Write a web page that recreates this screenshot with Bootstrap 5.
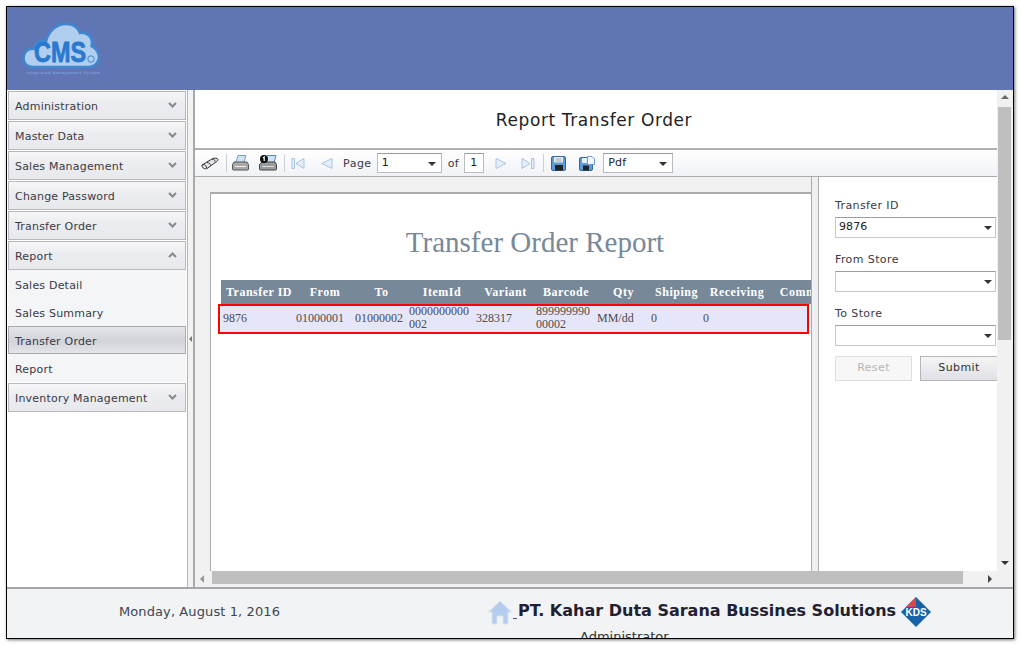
<!DOCTYPE html>
<html>
  <head>
    <title>Report Transfer Order</title>
    <meta charset="UTF-8" />
    <link href="https://cdn.jsdelivr.net/npm/bootstrap@5.3.3/dist/css/bootstrap.min.css" rel="stylesheet">
    <style>
      html, body { height: 100%; overflow: hidden; }
      body { background: #fff; font-family: "DejaVu Sans", Verdana, sans-serif; font-size: 11px; color: #3a3a44; }
      .app-frame { margin: 6px 0 0 6px; width: 1008px; height: 633px; border: 1px solid #000; box-shadow: 1px 1px 3px rgba(0,0,0,.55); background: #fff; overflow: hidden; }
      .app-head { height: 83px; background: #6076b4; padding: 15px 0 0 15px; }
      .app-mid { height: 497px; }

      /* left menu */
      .side-menu { width: 180px; padding: 1px 0 0 1px; }
      .menu-head { height: 29px; width: 178px; margin-bottom: 1px; padding: 4px 8px 0 6px; border: 1px solid #b6b8bb; background: linear-gradient(#f6f6f8, #ebecef 45%, #e8e9ed); letter-spacing: .2px; }
      .menu-head svg { margin-bottom: 6px; }
      .menu-head.after-sub { margin-top: 1px; }
      .sub-panel { width: 178px; background: #f4f5f7; }
      .sub-item { height: 28px; padding: 4px 6px 0; letter-spacing: .2px; border: 1px solid transparent; }
      .sub-item.is-on { border-color: #a9abb0; background: linear-gradient(#e4e5e9, #d3d4da 55%, #e3e4e8); }
      .side-split { width: 8px; background: #f2f2f3; border-left: 1px solid #b4b6b9; border-right: 2px solid #a8a9ad; }

      /* report side */
      .main-col { width: 819px; position: relative; }
      .report-title { height: 58px; width: 798px; padding-top: 4px; font-size: 17px; letter-spacing: .6px; color: #222; }
      .tool-bar { height: 29px; width: 802px; border-top: 2px solid #b0b0b3; border-bottom: 1px solid #a9abaf; background: linear-gradient(#fff, #f0f2f6); padding-left: 6px; }
      .tool-sep { width: 1px; height: 18px; background: #ccd0d6; }
      .tg5 { margin-left: 5px; }
      .tg6 { margin-left: 6px; }
      .tg7 { margin-left: 7px; }
      .tg8 { margin-left: 8px; }
      .tg10 { margin-left: 10px; }
      .tg11 { margin-left: 11px; }
      .tg13 { margin-left: 13px; }
      .tg15 { margin-left: 15px; }
      .tool-text { padding-top: 3px; letter-spacing: .5px; }
      .tool-combo { height: 20px; border: 1px solid #b9bbc0; border-top-color: #999; background: #fff; padding: 1px 5px 0 4px; color: #222; letter-spacing: .2px; }
      .combo-arrow { width: 0; height: 0; border: 4px solid transparent; border-top: 4px solid #333; border-bottom: 0; }
      .view-area { height: 394px; width: 802px; background: #f0f0f0; }
      .page-wrap { width: 601px; margin: 15px 0 0 15px; background: #fff; border-top: 2px solid #aaa; border-left: 1px solid #aaa; overflow: hidden; position: relative; }
      .page-sheet { width: 648px; height: 394px; padding: 0 0 0 10px; font-family: "Liberation Serif", "Times New Roman", serif; }
      .sheet-title { height: 86px; padding-top: 30px; margin: 0 0 0 -10px; text-align: center; font-size: 29px; line-height: 36px; color: #778899; font-weight: 400; }
      .rep-table { table-layout: fixed; width: 625px; border-collapse: collapse; font-size: 12px; line-height: 13px; }
      .rep-table col:nth-child(1) { width: 73px; }
      .rep-table col:nth-child(2) { width: 59px; }
      .rep-table col:nth-child(3) { width: 54px; }
      .rep-table col:nth-child(4) { width: 67px; }
      .rep-table col:nth-child(5) { width: 60px; }
      .rep-table col:nth-child(6) { width: 61px; }
      .rep-table col:nth-child(7) { width: 54px; }
      .rep-table col:nth-child(8) { width: 52px; }
      .rep-table col:nth-child(9) { width: 69px; }
      .rep-table col:nth-child(10) { width: 76px; }
      .rep-table th { height: 24px; background: #778899; color: #fff; text-align: center; white-space: nowrap; padding: 0 0 0 3px; letter-spacing: .5px; }
      .rep-table td { height: 29px; background: #e6e6fa; color: #4b4b4b; padding: 0 2px 1px; word-break: break-all; }
      .rep-table td:last-child { background: linear-gradient(90deg, #e6e6fa 37px, #fff 37px); }
      .row-mark { position: absolute; left: 7px; top: 110px; width: 591px; height: 30px; border: 2px solid #f00; pointer-events: none; }
      .view-split { width: 8px; background: #f0f0f0; border-left: 1px solid #a9abaf; border-right: 1px solid #a9abaf; }
      .filter-box { width: 178px; background: #fff; padding: 22px 0 0 16px; overflow: hidden; }
      .filter-label { height: 16px; letter-spacing: .4px; line-height: 14px; margin-bottom: 2px; }
      .filter-combo { width: 161px; height: 21px; margin-bottom: 15px; border: 1px solid #c6c8cc; border-top-color: #9b9ba3; background: #fff; padding: 0 3px; color: #222; letter-spacing: .1px; }
      .filter-btns { margin-top: -5px; }
      .soft-btn { height: 25px; font-size: 11px; letter-spacing: .4px; border: 1px solid #b4b6ba; border-radius: 0; padding: 0; background: linear-gradient(#f5f5f7, #dfe0e5); color: #333; flex: none; }
      .soft-btn.btn-reset { width: 77px; background: #f7f7f7; border-color: #dedfe1; color: #b5b5b5; }
      .soft-btn.btn-send { width: 78px; }
      .v-scroll { position: absolute; right: 0; top: 0; width: 17px; height: 497px; background: #f1f1f1; padding-top: 17px; }
      .v-thumb { width: 13px; height: 233px; margin-left: 1px; background: #bfbfbf; }
      .h-scroll { position: absolute; left: 0; bottom: 0; width: 802px; height: 16px; background: #f1f1f1; padding-left: 17px; }
      .h-thumb { width: 751px; height: 13px; background: #bfbfbf; }
      .sb-arrow { position: absolute; width: 0; height: 0; border: 4px solid transparent; }
      .up-a { left: 4px; top: 5px; border-top: 0; border-bottom: 4px solid #666; }
      .down-a { left: 4px; bottom: 22px; border-bottom: 0; border-top: 4px solid #333; }
      .left-a { left: 5px; top: 4px; border-left: 0; border-right: 4px solid #999; }
      .right-a { right: 5px; top: 4px; border-right: 0; border-left: 4px solid #444; }
      .split-a { left: 1px; top: 246px; border-width: 3px; border-left: 0; border-right: 3px solid #777; }

      /* footer */
      .app-foot { height: 52px; background: #f1f3f5; border-top: 2px solid #a4a6a9; }
      .foot-date { width: 385px; font-size: 13px; color: #40464f; padding-top: 13px; text-align: center; letter-spacing: .1px; }
      .foot-co { padding: 9px 0 0 96px; }
      .foot-home { margin-top: 2px; flex: none; }
      .foot-name { font-size: 16px; font-weight: 700; color: #1f2133; line-height: 20px; padding-top: 3px; white-space: nowrap; }
      .home-line { width: 4px; height: 1px; margin: 20px 1px 0 1px; background: #4a5a9a; flex: none; }
      .kds-mark { margin: -1px 0 0 5px; flex: none; }
      .foot-user { font-size: 13px; color: #333; padding: 2px 0 0 92px; line-height: 16px; white-space: nowrap; }
      .logo-small { font-family: "DejaVu Sans", sans-serif; font-size: 3.5px; fill: #8fb0e6; }
    </style>
  </head>
  <body>
    <div class="app-frame">
      <!-- header with cloud logo -->
      <div class="app-head">
        <svg width="80" height="60" viewBox="0 0 80 60">
          <path d="M11 45C5 45 1.500 41 1.500 36c0-6 5-10 11-9 0-5 4-8 8-8 1.500 0 2.500.3 3.500 1C26 9 35 2 44 2c7 0 12 4 14 9 6-1 12 3 12 10 0 1 0 2-.5 3C74 26 77 31 77 35c0 6-5 10-10 10z" fill="#b0cfee" stroke="#3f87d3" stroke-width="2.500"/>
          <text x="12" y="40" font-family="Liberation Sans, sans-serif" font-weight="700" font-size="30" fill="#2a78cf" stroke="#2a78cf" stroke-width=".8" textLength="52" lengthAdjust="spacingAndGlyphs">CMS</text>
          <circle cx="69" cy="37" r="3.200" fill="#b0cfee" stroke="#3f87d3"/>
          <text x="4" y="52" class="logo-small" textLength="74" lengthAdjust="spacing">Integrated Management System</text>
        </svg>
      </div>

      <div class="app-mid d-flex">
        <!-- left menu -->
        <div class="side-menu flex-shrink-0">
          <div class="menu-head d-flex align-items-center justify-content-between">Administration<svg width="9" height="6" viewBox="0 0 9 6"><path d="M1 1l3.500 3.500L8 1" fill="none" stroke="#85878c" stroke-width="2"/></svg></div>
          <div class="menu-head d-flex align-items-center justify-content-between">Master Data<svg width="9" height="6" viewBox="0 0 9 6"><path d="M1 1l3.500 3.500L8 1" fill="none" stroke="#85878c" stroke-width="2"/></svg></div>
          <div class="menu-head d-flex align-items-center justify-content-between">Sales Management<svg width="9" height="6" viewBox="0 0 9 6"><path d="M1 1l3.500 3.500L8 1" fill="none" stroke="#85878c" stroke-width="2"/></svg></div>
          <div class="menu-head d-flex align-items-center justify-content-between">Change Password<svg width="9" height="6" viewBox="0 0 9 6"><path d="M1 1l3.500 3.500L8 1" fill="none" stroke="#85878c" stroke-width="2"/></svg></div>
          <div class="menu-head d-flex align-items-center justify-content-between">Transfer Order<svg width="9" height="6" viewBox="0 0 9 6"><path d="M1 1l3.500 3.500L8 1" fill="none" stroke="#85878c" stroke-width="2"/></svg></div>
          <div class="menu-head d-flex align-items-center justify-content-between mb-0">Report<svg width="9" height="6" viewBox="0 0 9 6"><path d="M1 5l3.500-3.500L8 5" fill="none" stroke="#85878c" stroke-width="2"/></svg></div>
          <div class="sub-panel">
            <div class="sub-item d-flex align-items-center">Sales Detail</div>
            <div class="sub-item d-flex align-items-center">Sales Summary</div>
            <div class="sub-item is-on d-flex align-items-center">Transfer Order</div>
            <div class="sub-item d-flex align-items-center">Report</div>
          </div>
          <div class="menu-head after-sub d-flex align-items-center justify-content-between">Inventory Management<svg width="9" height="6" viewBox="0 0 9 6"><path d="M1 1l3.500 3.500L8 1" fill="none" stroke="#85878c" stroke-width="2"/></svg></div>
        </div>
        <div class="side-split flex-shrink-0 position-relative"><span class="sb-arrow split-a"></span></div>

        <!-- report viewer -->
        <div class="main-col flex-shrink-0">
          <div class="report-title d-flex align-items-center justify-content-center">Report Transfer Order</div>
          <div class="tool-bar d-flex align-items-center">
            <svg width="18" height="13" viewBox="0 0 18 13"><path d="M1 8l10-6c2-1.500 6-1 6 .5 0 1-1 2-2 2.500L6 11.500C4 12.500 .5 11 1 8z" fill="#e4e4e4" stroke="#333"/><path d="M6 5.500c2 0 3.500 1.500 3.500 3M1.500 8c2-1 4 .5 4 3M11 2c2 0 3 1 3 2.500" fill="none" stroke="#333"/></svg>
            <div class="tool-sep tg7"></div>
            <svg class="tg5" width="17" height="16" viewBox="0 0 17 16"><path d="M6 .5h8l-2 7H4z" fill="#cfe2f6" stroke="#7d9cc0"/><path d="M2 7h13l1.500 2.500V14a1 1 0 01-1 1H1.500a1 1 0 01-1-1V9.500z" fill="#a9a9a9" stroke="#555"/><path d="M3 11.500h11" stroke="#eee"/></svg>
            <svg class="tg10" width="18" height="16" viewBox="0 0 18 16"><path d="M8 .5h9l-2 7H6z" fill="#cfe2f6" stroke="#5d84b8"/><path d="M3 7h13l1.500 2.500V14a1 1 0 01-1 1h-15a1 1 0 01-1-1V9.500z" fill="#999" stroke="#444"/><path d="M3 11.500h12" stroke="#ddd"/><circle cx="5" cy="4" r="4" fill="#111"/><path d="M4 3l1.200-1V6" fill="none" stroke="#fff" stroke-width="1.200"/></svg>
            <div class="tool-sep tg7"></div>
            <svg class="tg6" width="14" height="13" viewBox="0 0 14 13"><path d="M1 1.500h2.500v10H1zM13 1.500v10L5 6.500z" fill="#e6eff9" stroke="#a5c3e6"/></svg>
            <svg class="tg15" width="13" height="13" viewBox="0 0 13 13"><path d="M12 1.500v10L2 6.500z" fill="#e6eff9" stroke="#a5c3e6"/></svg>
            <span class="tool-text tg10">Page</span>
            <div class="tool-combo tg5 d-flex align-items-center justify-content-between" style="width:65px"><span>1</span><span class="combo-arrow"></span></div>
            <span class="tool-text tg6">of</span>
            <div class="tool-combo tg5 d-flex align-items-center justify-content-center" style="width:20px">1</div>
            <svg class="tg11" width="13" height="13" viewBox="0 0 13 13"><path d="M1 1.500v10L11 6.500z" fill="#e6eff9" stroke="#a5c3e6"/></svg>
            <svg class="tg13" width="14" height="13" viewBox="0 0 14 13"><path d="M10.500 1.500H13v10h-2.500zM1 1.500v10l8-5z" fill="#e6eff9" stroke="#a5c3e6"/></svg>
            <div class="tool-sep tg8"></div>
            <svg class="tg7" width="15" height="15" viewBox="0 0 15 15"><rect x=".5" y=".5" width="14" height="14" rx="1.500" fill="#5f9ad6" stroke="#2b69ab"/><path d="M3 1h9v5.500H3z" fill="#e8eef5"/><path d="M4.500 3h6M4.500 5h6" stroke="#9aa6b2"/><path d="M4 9h8v5.500H4z" fill="#222"/></svg>
            <svg class="tg13" width="16" height="15" viewBox="0 0 16 15"><rect x=".5" y="1.500" width="13" height="13" rx="1.500" fill="#5f9ad6" stroke="#2b69ab"/><path d="M3 2h6v5H3z" fill="#e8eef5"/><path d="M4 9.500h6v5H4z" fill="#222"/><path d="M8.500.5h4.500l2.500 2.500v5.500h-7z" fill="#f3f6fa" stroke="#6d9ad0"/></svg>
            <div class="tool-combo tg8 d-flex align-items-center justify-content-between" style="width:70px"><span>Pdf</span><span class="combo-arrow"></span></div>
          </div>

          <div class="view-area d-flex">
            <div class="page-wrap flex-shrink-0">
              <div class="page-sheet">
                <div class="sheet-title">Transfer Order Report</div>
                <table class="rep-table">
                  <colgroup><col><col><col><col><col><col><col><col><col><col></colgroup>
                  <thead>
                    <tr><th>Transfer ID</th><th>From</th><th>To</th><th>ItemId</th><th>Variant</th><th>Barcode</th><th>Qty</th><th>Shiping</th><th>Receiving</th><th>Comments</th></tr>
                  </thead>
                  <tbody>
                    <tr><td>9876</td><td>01000001</td><td>01000002</td><td>0000000000002</td><td>328317</td><td>89999999000002</td><td>MM/dd</td><td>0</td><td>0</td><td></td></tr>
                  </tbody>
                </table>
              </div>
              <div class="row-mark"></div>
            </div>
            <div class="view-split flex-shrink-0"></div>
            <div class="filter-box flex-shrink-0">
              <div class="filter-label">Transfer ID</div>
              <div class="filter-combo d-flex align-items-center justify-content-between"><span>9876</span><span class="combo-arrow"></span></div>
              <div class="filter-label">From Store</div>
              <div class="filter-combo d-flex align-items-center justify-content-end"><span class="combo-arrow"></span></div>
              <div class="filter-label">To Store</div>
              <div class="filter-combo d-flex align-items-center justify-content-end"><span class="combo-arrow"></span></div>
              <div class="filter-btns d-flex gap-2">
                <button type="button" class="btn soft-btn btn-reset">Reset</button>
                <button type="button" class="btn soft-btn btn-send">Submit</button>
              </div>
            </div>
          </div>

          <div class="h-scroll">
            <span class="sb-arrow left-a"></span>
            <div class="h-thumb"></div>
            <span class="sb-arrow right-a"></span>
          </div>
          <div class="v-scroll">
            <span class="sb-arrow up-a"></span>
            <div class="v-thumb"></div>
            <span class="sb-arrow down-a"></span>
          </div>
        </div>
      </div>

      <!-- footer -->
      <div class="app-foot d-flex">
        <div class="foot-date flex-shrink-0">Monday, August 1, 2016</div>
        <div class="foot-co">
          <div class="d-flex align-items-start">
            <svg class="foot-home" width="24" height="25" viewBox="0 0 24 25"><path d="M12 1L.5 12H4v11a1 1 0 001 1h4v-8h6v8h4a1 1 0 001-1V12h3.500z" fill="#b4cdec" stroke="#d9e3ef"/></svg>
            <span class="home-line"></span>
            <span class="foot-name">PT. Kahar Duta Sarana Bussines Solutions</span>
            <svg class="kds-mark" width="30" height="30" viewBox="0 0 30 30"><path d="M15 0l15 15-15 15L0 15z" fill="#1763a8"/><path d="M15 0v10H5z" fill="#e2424a"/><text x="15" y="19" text-anchor="middle" font-family="Liberation Sans, sans-serif" font-weight="700" font-size="10" fill="#fff">KDS</text></svg>
          </div>
          <div class="foot-user">Administrator</div>
        </div>
      </div>
    </div>
  </body>
</html>
